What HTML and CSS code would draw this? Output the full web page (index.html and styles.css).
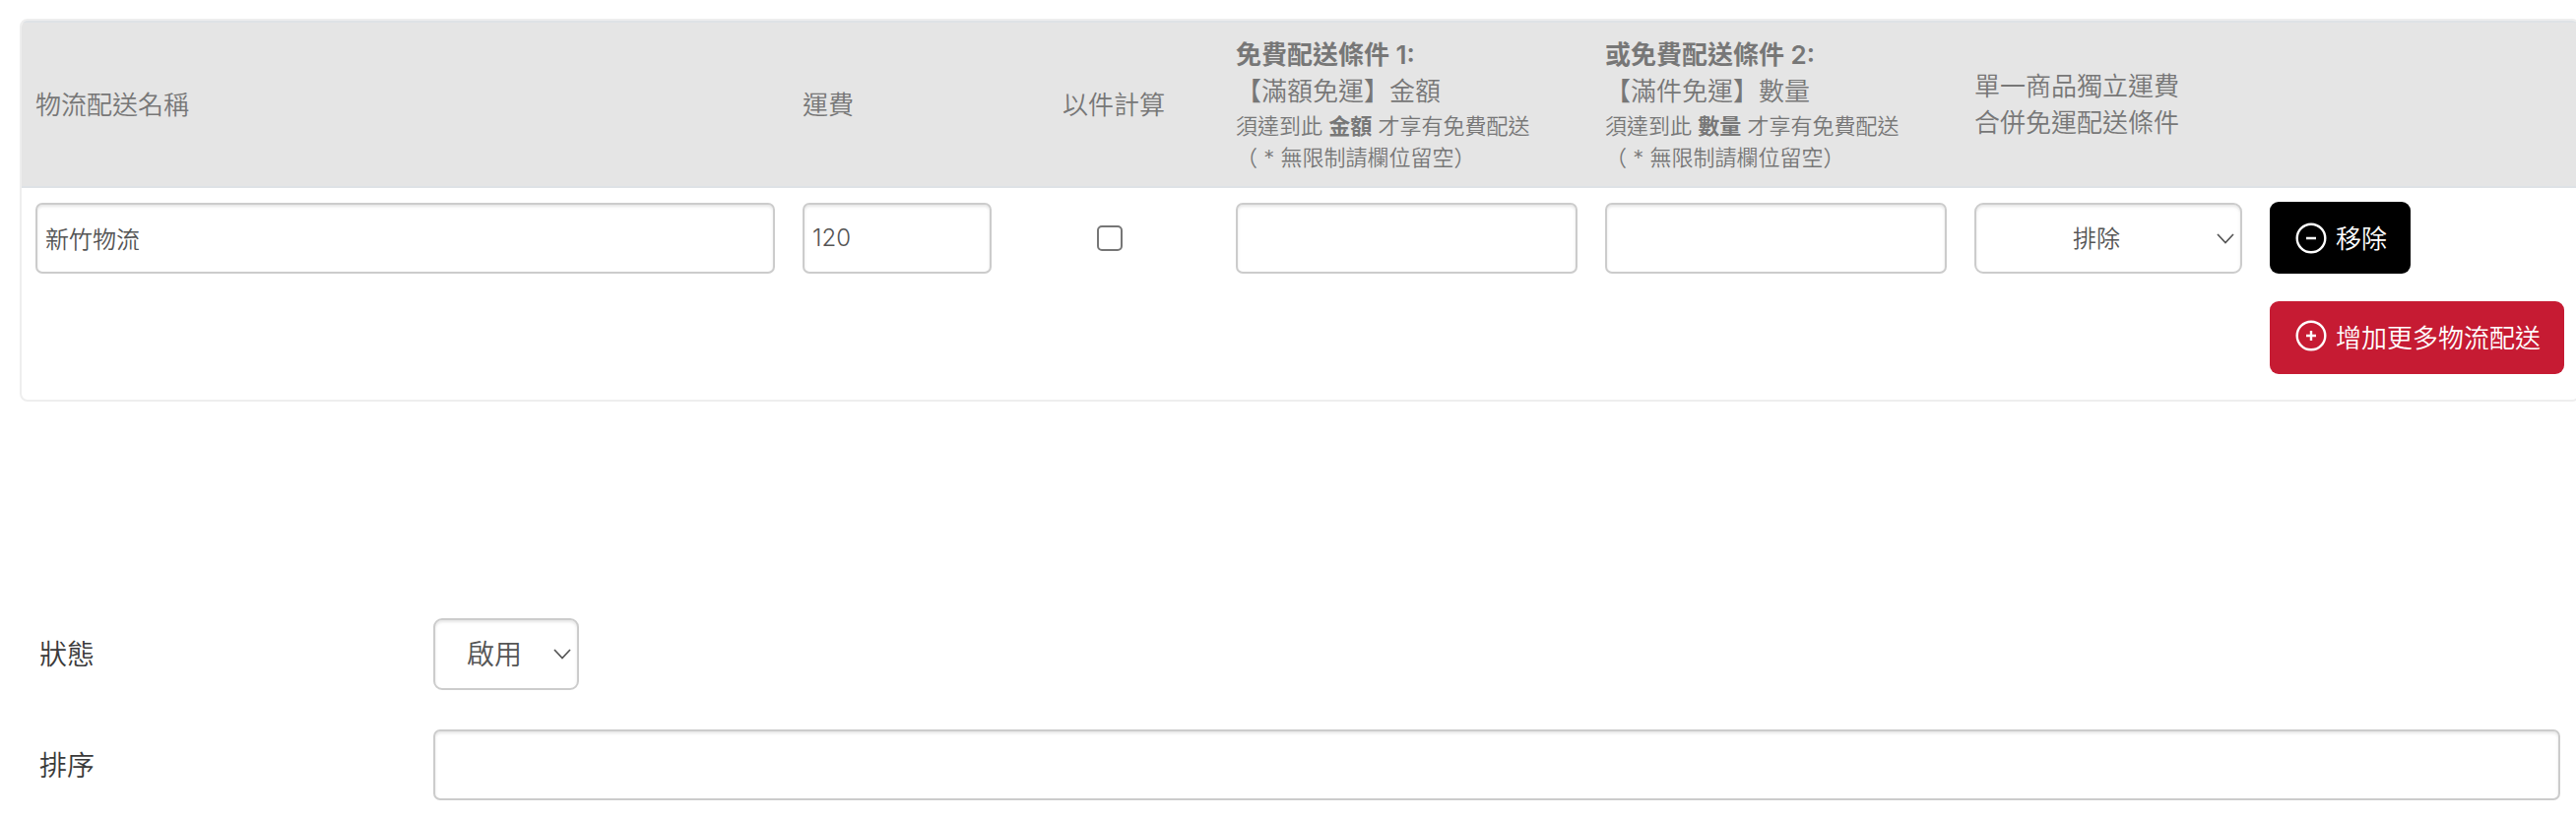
FILE: index.html
```html
<!DOCTYPE html>
<html lang="zh-Hant">
<head>
  <meta charset="UTF-8">
  <meta name="viewport" content="width=device-width, initial-scale=1.0">
  <title>物流配送</title>
  <link rel="stylesheet" href="styles.css">
</head>
<body>
  <div class="panel">
    <table class="shipping">
      <colgroup>
        <col class="col-name">
        <col class="col-fee">
        <col class="col-each">
        <col class="col-free">
        <col class="col-free">
        <col class="col-single">
        <col class="col-action">
      </colgroup>
      <thead>
        <tr>
          <th>物流配送名稱</th>
          <th>運費</th>
          <th class="center">以件計算</th>
          <th>
            <b>免費配送條件 1:</b><br>
            【滿額免運】金額
            <div class="hint">須達到此 <b>金額</b> 才享有免費配送<br>（ * 無限制請欄位留空）</div>
          </th>
          <th>
            <b>或免費配送條件 2:</b><br>
            【滿件免運】數量
            <div class="hint">須達到此 <b>數量</b> 才享有免費配送<br>（ * 無限制請欄位留空）</div>
          </th>
          <th>單一商品獨立運費<br>合併免運配送條件</th>
          <th></th>
        </tr>
      </thead>
      <tbody>
        <tr>
          <td><input type="text" class="form-control" value="新竹物流"></td>
          <td><input type="text" class="form-control" value="120"></td>
          <td class="center"><input type="checkbox" class="check"></td>
          <td><input type="text" class="form-control"></td>
          <td><input type="text" class="form-control"></td>
          <td>
            <div class="select">
              <span>排除</span>
              <svg class="arrow" viewBox="0 0 18 11"><path d="M1 1l8 8.5L17 1"/></svg>
            </div>
          </td>
          <td>
            <button class="btn btn-remove">
              <svg class="icon" viewBox="0 0 32 32"><circle cx="16" cy="16" r="14.3"/><path d="M11 16h10"/></svg>
              <span>移除</span>
            </button>
          </td>
        </tr>
        <tr>
          <td colspan="6"></td>
          <td>
            <button class="btn btn-add">
              <svg class="icon" viewBox="0 0 32 32"><circle cx="16" cy="16" r="14.3"/><path d="M11 16h10M16 11v10"/></svg>
              <span>增加更多物流配送</span>
            </button>
          </td>
        </tr>
      </tbody>
    </table>
  </div>

  <div class="form-group">
    <label>狀態</label>
    <div class="select select-status">
      <span>啟用</span>
      <svg class="arrow" viewBox="0 0 18 11"><path d="M1 1l8 8.5L17 1"/></svg>
    </div>
  </div>
  <div class="form-group">
    <label>排序</label>
    <input type="text" class="form-control">
  </div>
</body>
</html>
```
FILE: styles.css
```css
* {
  box-sizing: border-box;
}

body {
  margin: 0;
  padding-top: 19px;
  overflow: hidden;
  background: #fff;
  color: #3a3a3a;
  font-family: Inter, "Noto Sans CJK TC", sans-serif;
  font-size: 28px;
  font-weight: 350;
}

.panel {
  width: 2600px;
  height: 389px;
  margin: 0 0 220px 20px;
  border: 2px solid #eee;
  border-radius: 8px;
  overflow: hidden;
}

.shipping {
  width: 2596px;
  table-layout: fixed;
  border-collapse: separate;
  border-spacing: 0;
}

.col-name { width: 779px; }
.col-fee { width: 220px; }
.col-each { width: 220px; }
.col-free { width: 375px; }
.col-single { width: 300px; }
.col-action { width: 327px; }

th {
  height: 170px;
  padding: 0 14px;
  background: #e5e5e5;
  border-top: 2px solid #dee2e6;
  border-bottom: 2px solid #dee2e6;
  color: #777;
  font-size: 26px;
  font-weight: 350;
  line-height: 37px;
  text-align: left;
  vertical-align: middle;
  white-space: nowrap;
}

th b {
  font-weight: 600;
}

.hint {
  padding-top: 1px;
  font-size: 22px;
  line-height: 32px;
}

td {
  padding: 14px 14px;
  line-height: 0;
  vertical-align: top;
}

.center {
  text-align: center;
}

.form-control,
.select {
  width: 100%;
  height: 72px;
  margin: 1px 0 0;
  padding: 0 8px 1px;
  border: 2px solid #ccc;
  border-radius: 7px;
  background: #fff;
  box-shadow: inset 0 2px 3px rgba(0, 0, 0, 0.1);
  color: #555;
  font-family: inherit;
  font-size: 24px;
  font-weight: 350;
}

.select {
  display: flex;
  align-items: center;
  padding: 0 6px;
  border-radius: 9px;
  line-height: 1;
}

.select span {
  flex: 1;
  padding: 2px 6px 0 0;
  text-align: center;
}

.arrow {
  width: 18px;
  height: 11px;
  fill: none;
  stroke: #555;
  stroke-width: 1.7;
}

.check {
  appearance: none;
  width: 26px;
  height: 26px;
  margin: 24px 8px 0 0;
  border: 2px solid #767676;
  border-radius: 5px;
  background: #fff;
}

.btn {
  display: flex;
  align-items: center;
  gap: 9px;
  height: 73px;
  padding: 0 24px 0 26px;
  border: 0;
  border-radius: 9px;
  color: #fff;
  font-family: inherit;
  font-size: 26px;
  font-weight: 350;
  white-space: nowrap;
}

.btn span {
  padding-bottom: 3px;
}

.btn-remove {
  background: #000;
}

.btn-add {
  height: 74px;
  background: #c61b33;
}

.icon {
  width: 32px;
  height: 32px;
  fill: none;
  stroke: #fff;
  stroke-width: 2.4;
}

.btn-add .icon {
  margin-bottom: 5px;
}

.form-group {
  display: flex;
  align-items: center;
  height: 72px;
  margin: 0 16px 41px 40px;
}

.form-group label {
  width: 400px;
  padding-bottom: 2px;
}

.form-group .form-control {
  flex: 1;
  margin: 0;
}

.form-group .select-status {
  width: 148px;
  height: 73px;
  margin: 0;
  font-size: 28px;
}
```
